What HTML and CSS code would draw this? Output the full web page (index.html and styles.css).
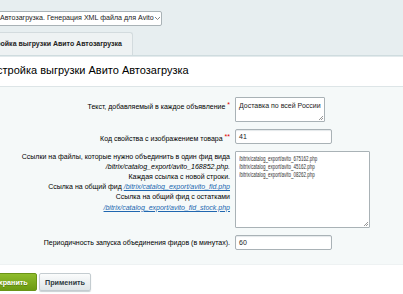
FILE: index.html
```html
<!DOCTYPE html>
<html lang="ru">
<head>
<meta charset="utf-8">
<title>Настройка выгрузки Авито Автозагрузка</title>
<link rel="stylesheet" href="styles.css">
</head>
<body>
<div class="top">
  <div class="select">
    <span class="select-text">Автозагрузка. Генерация XML файла для Avito</span>
    <svg class="chev" width="7" height="5" viewBox="0 0 7 5"><path d="M1 1 L3.5 3.5 L6 1" fill="none" stroke="#777" stroke-width="0.9"/></svg>
  </div>
</div>
<div class="tabs">
  <div class="tab">Настройка выгрузки Авито Автозагрузка</div>
</div>
<div class="panel">
  <div class="title">Настройка выгрузки Авито Автозагрузка</div>
  <div class="form">
    <div class="label l1">Текст, добавляемый в каждое объявление <span class="req">*</span></div>
    <div class="field"><div class="textarea ta1">Доставка по всей России<span class="grip"></span></div></div>

    <div class="label l2">Код свойства с изображением товара <span class="req">**</span></div>
    <div class="field"><div class="input">41</div></div>

    <div class="label l3">Ссылки на файлы, которые нужно объединить в один фид вида<br><i>/bitrix/catalog_export/avito_168852.php.</i><br>Каждая ссылка с новой строки.<br>Ссылка на общий фид <a href="#">/bitrix/catalog_export/avito_fid.php</a><br>Ссылка на общий фид с остатками<br><a href="#">/bitrix/catalog_export/avito_fid_stock.php</a></div>
    <div class="field"><div class="textarea ta2"><span class="ta2-text">/bitrix/catalog_export/avito_675162.php<br>/bitrix/catalog_export/avito_45162.php<br>/bitrix/catalog_export/avito_08262.php</span><span class="grip"></span></div></div>

    <div class="label l4">Периодичность запуска объединения фидов (в минутах).</div>
    <div class="field"><div class="input">60</div></div>
  </div>
  <div class="buttons">
    <button class="btn save">Сохранить</button>
    <button class="btn apply">Применить</button>
  </div>
</div>
</body>
</html>
```
FILE: styles.css
```css
* { box-sizing: border-box; }
html, body { margin: 0; padding: 0; }
body {
  width: 403px;
  height: 294px;
  overflow: hidden;
  background: #e7eef0;
  font-family: "Liberation Sans", Arial, sans-serif;
  color: #000;
}
.top { padding-top: 11px; height: 32px; }
.select {
  margin-left: -6px;
  width: 168px;
  height: 15px;
  background: #fff;
  border: 1px solid #a9b2b6;
  border-radius: 2px;
  font-size: 7.1px;
  line-height: 13px;
  padding-left: 5px;
  padding-right: 3px;
  color: #222;
  display: flex;
  align-items: center;
  justify-content: space-between;
  white-space: nowrap;
}
.chev { display: block; flex-shrink: 0; }
.tabs { height: 23px; display: flex; }
.tab {
  margin-left: -26px;
  width: 159px;
  height: 23px;
  background: #eef2f3;
  border: 1px solid #d3dbde;
  border-bottom: none;
  border-radius: 3px 3px 0 0;
  font-size: 7px;
  font-weight: bold;
  line-height: 22px;
  padding-left: 5px;
  color: #222;
  white-space: nowrap;
}
.panel {
  background: #fff;
  border-top: 1px solid #cfdcdf;
  height: 239px;
}
.title {
  height: 31px;
  font-size: 11px;
  line-height: 28px;
  margin-left: -17px;
  border-bottom: 1px solid #dde5e7;
  color: #000;
  white-space: nowrap;
  box-shadow: inset 0 1px 0 #e3eaec;
}
.form {
  background: #f5f9f9;
  padding: 10px 0 14px;
  display: grid;
  grid-template-columns: 235px 1fr;
  row-gap: 7px;
  border-bottom: 1px solid #eef2f3;
}
.label {
  text-align: right;
  padding-right: 5px;
  font-size: 7px;
  line-height: 10.1px;
  color: #000;
  white-space: nowrap;
}
.l1 { padding-top: 3px; }
.l2 { padding-top: 3px; }
.l3 { padding-top: 1px; }
.l4 { padding-top: 3px; }
.label i { font-style: italic; }
.label a { color: #2067b0; font-style: italic; text-decoration: underline; }
.req { color: #d00; font-size: 7px; vertical-align: 2px; }
.field { display: flex; align-items: flex-start; }
.textarea, .input {
  position: relative;
  background: #fff;
  border: 1px solid #a9b2b6;
  color: #222;
  white-space: nowrap;
}
.textarea { padding: 3px 3px; border-radius: 1px; }
.ta1 { width: 90px; height: 25px; font-size: 7px; line-height: 9px; }
.ta2 {
  width: 135px;
  height: 77px;
  padding-top: 3px;
}
.ta2-text {
  display: inline-block;
  font-size: 6.6px;
  line-height: 7.8px;
  color: #333;
  transform: scaleX(0.68);
  transform-origin: 0 0;
}
.input {
  width: 97px;
  height: 15px;
  font-size: 7px;
  line-height: 13px;
  padding-left: 3px;
  border-radius: 2px;
  box-shadow: inset 0 1px 1px #e4e8ea;
}
.grip {
  position: absolute;
  right: 1px;
  bottom: 1px;
  width: 4px;
  height: 4px;
  background: linear-gradient(135deg, transparent 45%, #999 45%, #999 55%, transparent 55%, transparent 75%, #999 75%, #999 85%, transparent 85%);
}
.buttons {
  display: flex;
  gap: 2px;
  padding-top: 8px;
}
.btn {
  height: 18px;
  font-family: "Liberation Sans", Arial, sans-serif;
  font-size: 7.2px;
  font-weight: bold;
  border-radius: 2px;
  padding: 0;
  cursor: pointer;
}
.save {
  margin-left: -20px;
  width: 57px;
  color: #fff;
  background: linear-gradient(#8fbc2c, #6b9a12);
  border: 1px solid #6a9416;
  text-shadow: 0 1px 0 #5a7f10;
}
.apply {
  width: 52px;
  color: #2d3a40;
  background: linear-gradient(#fbfcfc, #dfe6e8);
  border: 1px solid #c4ccd0;
  box-shadow: 0 1px 1px #c9d0d3;
}
```
